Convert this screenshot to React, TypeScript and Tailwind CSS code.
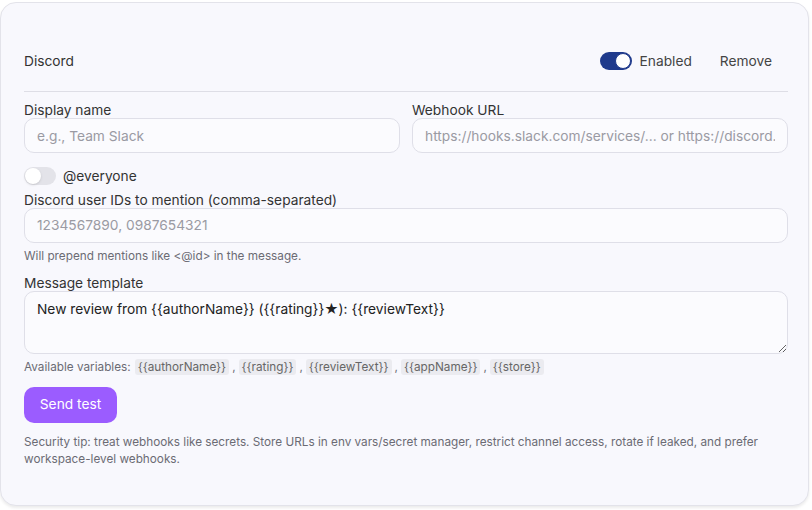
import React, { useState } from 'react';

const vars = ['{{authorName}}', '{{rating}}', '{{reviewText}}', '{{appName}}', '{{store}}'];

function Toggle({ on, onChange }: { on: boolean; onChange: () => void }) {
  return (
    <button
      type="button"
      onClick={onChange}
      className={
        'relative inline-flex h-[18px] w-[32px] shrink-0 items-center rounded-full transition-colors ' +
        (on ? 'bg-[#1f3a8c]' : 'bg-[#e3e3e9]')
      }
    >
      <span
        className={
          'absolute top-[1px] h-[16px] w-[16px] rounded-full bg-white ' +
          (on ? 'left-[15px] border-[1.5px] border-[#1f3a8c]' : 'left-[1px] shadow-sm')
        }
      />
    </button>
  );
}

export default function App() {
  const [enabled, setEnabled] = useState(true);
  const [everyone, setEveryone] = useState(false);
  const [template, setTemplate] = useState('New review from {{authorName}} ({{rating}}★): {{reviewText}}');

  const inputCls =
    'block h-[35px] w-full rounded-[10px] border border-[#dfdfe8] bg-[#fbfbfe] px-3 text-[13.75px] text-[#333] placeholder:text-[#9a9aa3] outline-none';

  return (
    <div className="min-h-[510px] bg-white pt-[2px] font-['Inter',sans-serif] text-[#333]">
      <div className="w-[809px] rounded-2xl border border-[#e3e3ea] bg-[#f8f8fd] pb-[37px] pl-[23px] pr-5 pt-[40px] shadow-[0_2px_3px_rgba(0,0,0,0.08)]">
        {/* header */}
        <div className="box-content flex h-[36px] items-center justify-between border-b border-[#dedee6] pb-[12px]">
          <span className="text-[13.75px] text-[#333]">Discord</span>
          <div className="flex items-center">
            <Toggle on={enabled} onChange={() => setEnabled(!enabled)} />
            <span className="ml-[8px] text-[13.75px] text-[#444]">Enabled</span>
            <button type="button" className="ml-[28px] mr-[16px] text-[13.75px] text-[#444]">
              Remove
            </button>
          </div>
        </div>

        <div className="mt-[10px] grid grid-cols-2 gap-3">
          <div>
            <label className="block text-[13.75px] leading-[16px] text-[#333]">Display name</label>
            <input className={inputCls} placeholder="e.g., Team Slack" />
          </div>
          <div>
            <label className="block text-[13.75px] leading-[16px] text-[#333]">Webhook URL</label>
            <input
              className={inputCls}
              placeholder="https://hooks.slack.com/services/... or https://discord.com/api/webhooks/..."
            />
          </div>
        </div>

        <div className="mt-[13px] flex items-center gap-[7px]">
          <Toggle on={everyone} onChange={() => setEveryone(!everyone)} />
          <span className="text-[13.75px] text-[#333]">@everyone</span>
        </div>

        <label className="mt-[5px] block text-[13.75px] leading-[16px] text-[#333]">
          Discord user IDs to mention (comma-separated)
        </label>
        <input className={inputCls} placeholder="1234567890, 0987654321" />
        <p className="mt-[6px] text-[11.75px] leading-[14px] text-[#6b6b74]">
          Will prepend mentions like &lt;@id&gt; in the message.
        </p>

        <label className="mt-[12px] block text-[13.75px] leading-[16px] text-[#333]">Message template</label>
        <textarea
          value={template}
          onChange={(e) => setTemplate(e.target.value)}
          className="block h-[63px] w-full rounded-[10px] border border-[#dfdfe8] bg-[#fbfbfe] px-3 pb-[9px] pt-[8px] text-[13.75px] leading-[18px] text-[#222] outline-none"
        />

        <div className="mt-[5px] flex items-center text-[11.75px] leading-[16px] text-[#6b6b74]">
          <span className="mr-[4px]">Available variables:</span>
          {vars.map((v, i) => (
            <span key={v} className="flex items-center">
              <code className="rounded-[3px] bg-[#ebebf0] px-[3px] font-['Inter',sans-serif] text-[11.75px] text-[#666]">{v}</code>
              {i < vars.length - 1 && <span className="mx-[3px]">,</span>}
            </span>
          ))}
        </div>

        <button
          type="button"
          className="mt-[12px] h-[36px] w-[93px] rounded-[10px] bg-[#9b5cff] text-[13.75px] text-white"
        >
          Send test
        </button>

        <p className="mt-[11px] max-w-[764px] text-[11.75px] leading-[17px] text-[#6b6b74]">
          Security tip: treat webhooks like secrets. Store URLs in env vars/secret manager, restrict channel access,
          rotate if leaked, and prefer workspace-level webhooks.
        </p>
      </div>
    </div>
  );
}
